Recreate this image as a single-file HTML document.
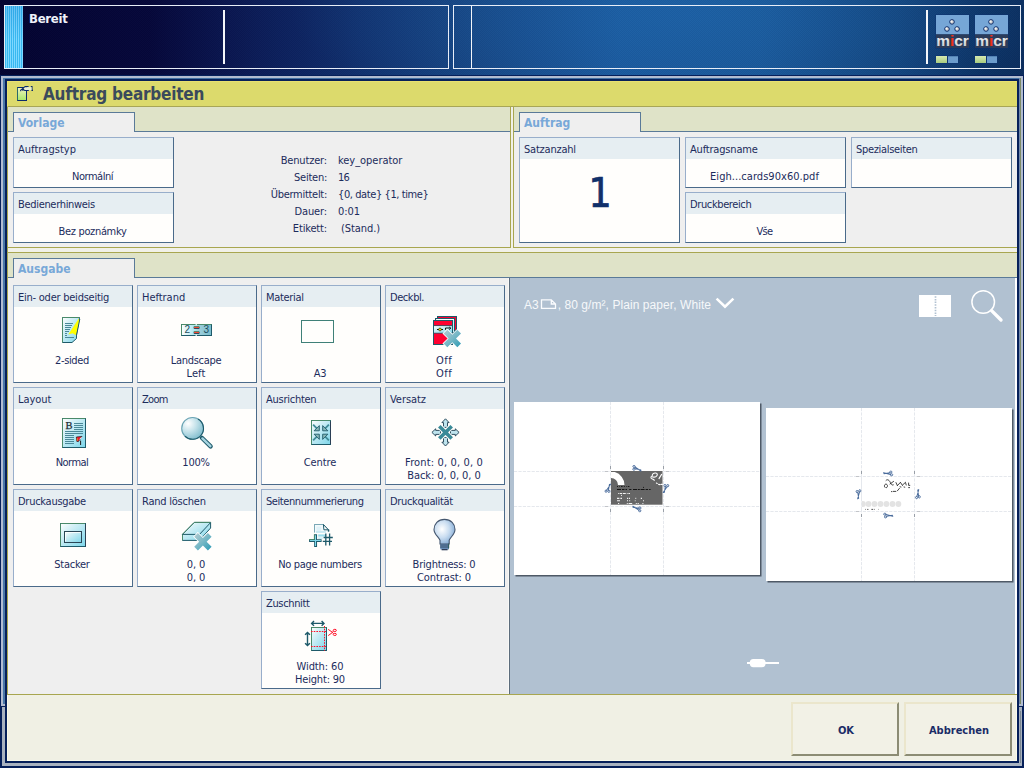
<!DOCTYPE html>
<html lang="de">
<head>
<meta charset="utf-8">
<title>Auftrag bearbeiten</title>
<style>
*{box-sizing:border-box;margin:0;padding:0}
html,body{width:1024px;height:768px;overflow:hidden}
body{position:relative;font-family:"DejaVu Sans Condensed","Liberation Sans",sans-serif;font-size:11px;letter-spacing:-.3px;color:#1c2c5c;
 background:#040530;}
.abs{position:absolute}
/* ---------- top status bar ---------- */
#topbg{position:absolute;left:0;top:0;width:1024px;height:76px;
 background:
  radial-gradient(ellipse 400px 110px at 690px 14px, rgba(32,112,186,.42), rgba(32,112,186,0) 100%),
  linear-gradient(90deg,#030330 0px,#05073a 150px,#0b1c58 260px,#10306e 360px,#15427f 470px,#19569a 620px,#185494 760px,#114078 900px,#0b3062 980px,#0a2c5c 1024px);}
#topbg:after{content:"";position:absolute;left:0;top:0;right:0;bottom:0;
 background:repeating-conic-gradient(rgba(0,0,20,.045) 0 25%,rgba(255,255,255,.015) 0 50%) 0 0/2px 2px;}
.tpanel{position:absolute;top:5px;height:64px;border:1px solid #e8eef8;}
#tp1{left:4px;width:445px}
#tp2{left:453px;width:568px}
#strip{position:absolute;left:0;top:0;width:18px;height:62px;
 background:linear-gradient(rgba(0,90,190,.18),rgba(0,90,190,0) 55%),repeating-linear-gradient(90deg,#38b8f0 0 1px,#7fd8ff 1px 2px);}
.vline{position:absolute;background:#f4f6fa}
#bereit{position:absolute;left:24px;top:5px;font-weight:bold;font-size:13px;color:#f0f2fa;line-height:15px;letter-spacing:-.25px}
/* ---------- window frame ---------- */
#frame{position:absolute;left:0;top:75px;width:1024px;height:693px;background:#06205a}
#frame i{position:absolute;display:block}
#winbg{position:absolute;left:7px;top:81px;width:1010px;height:680px;background:#efefef}
#win{position:absolute;left:0;top:0;width:1024px;height:768px}
#title{position:absolute;left:7px;top:81px;width:1010px;height:26px;background:#dcda6c;border-left:1px solid #e8e070;border-top:1px solid #e8e070;border-bottom:1px solid #a8a656}
#title span{position:absolute;left:35px;top:2px;font-weight:bold;font-size:17px;line-height:21px;color:#3a4a5c;letter-spacing:-.22px}

/* ---------- panels ---------- */
.olv{position:absolute;background:#a8a650}
.strip{position:absolute;background:#dfe3c8}
.band{position:absolute;background:#f1f1e8}
.tline{position:absolute;height:1px;background:#5a7a98}
.tab{position:absolute;width:122px;height:20px;background:#efefef;border:1px solid #5a7a98;border-bottom:none;
 font-weight:bold;font-size:12px;line-height:21px;padding-left:4px;color:#78a8d8;letter-spacing:0}
.card{position:absolute;background:#fffefc;border:1px solid #4a6a8a;border-top-color:#98aecb;border-left-color:#98aecb;text-align:center}
.card .h{position:absolute;left:0;top:0;right:0;height:21px;background:#e6eef2;text-align:left;padding-left:4px;line-height:24px;white-space:nowrap;overflow:hidden}
.card .v{position:absolute;left:0;right:2px;line-height:13px;white-space:nowrap}
.c2{width:161px;height:51px}
.c3{width:120px;height:98px}
.kv{position:absolute;line-height:13px;white-space:nowrap}
.kv.k{text-align:right;width:120px;left:207px}
.kv.w{left:338px}

/* ---------- preview pane ---------- */
#pv{position:absolute;left:510px;top:278px;width:505px;height:416px;background:#b1c1d1}
#pvtxt{position:absolute;left:524px;top:298px;font-family:"Liberation Sans",sans-serif;font-size:12px;line-height:15px;color:#f6f8fa;letter-spacing:.07px;white-space:nowrap}
.page{position:absolute;background:#fff;box-shadow:1.5px 1.5px 0 0 #4e5a68}
.gd{position:absolute}

.btn{position:absolute;width:108px;height:54px;background:#f2f1e6;border:2px solid #8c8c74;border-top:2px solid #ebe6cc;border-left:2px solid #ebe6cc;
 font-weight:bold;font-size:11px;line-height:53px;text-align:center;color:#1a2c66;letter-spacing:0;padding-left:2px}
</style>
</head>
<body>
<svg width="0" height="0" style="position:absolute"><defs>
<linearGradient id="gc" x1="0" y1="0" x2="1" y2="1"><stop offset="0" stop-color="#ffffff"/><stop offset=".3" stop-color="#d4f0f6"/><stop offset="1" stop-color="#7cd6ea"/></linearGradient>
<linearGradient id="gx" x1="0" y1="0" x2="1" y2="1"><stop offset="0" stop-color="#b4ccd2"/><stop offset=".5" stop-color="#78b8c6"/><stop offset="1" stop-color="#2a9ab4"/></linearGradient>
<linearGradient id="gh" x1="0" y1="0" x2="1" y2="0"><stop offset="0" stop-color="#ffffff"/><stop offset=".45" stop-color="#a8e4ee"/><stop offset=".55" stop-color="#a0d0dc"/><stop offset="1" stop-color="#78bccc"/></linearGradient>
<radialGradient id="gz" cx=".3" cy=".28" r=".75"><stop offset="0" stop-color="#ffffff"/><stop offset=".5" stop-color="#c4e2ea"/><stop offset="1" stop-color="#86c0d0"/></radialGradient>
<radialGradient id="gb" cx=".38" cy=".4" r=".7"><stop offset="0" stop-color="#ffffff"/><stop offset=".5" stop-color="#c8dcf0"/><stop offset="1" stop-color="#7aa4d0"/></radialGradient>
<linearGradient id="gt" x1="0" y1="0" x2="0" y2="1"><stop offset="0" stop-color="#f4f2c0"/><stop offset="1" stop-color="#a8e868"/></linearGradient>
<g id="xm"><path d="M3.70,0.00 L8.70,5.00 L13.70,0.00 L17.40,3.70 L12.40,8.70 L17.40,13.70 L13.70,17.40 L8.70,12.40 L3.70,17.40 L0.00,13.70 L5.00,8.70 L0.00,3.70 Z" fill="url(#gx)" stroke="#ffffff" stroke-width="1.6" stroke-linejoin="miter" paint-order="stroke"/></g>
<g id="sc"><ellipse cx="-3.3" cy="-1.5" rx="1.3" ry="1.1" fill="none" stroke="#4a6c9c" stroke-width="1"/><ellipse cx="-3" cy="1.6" rx="1.3" ry="1.1" fill="none" stroke="#4a6c9c" stroke-width="1"/><path d="M-2.2,-1 L5,2.4 M-1.9,1 L4.6,1.2 L5,2.4" fill="none" stroke="#4a6c9c" stroke-width="1.1" stroke-linecap="round"/></g>
<linearGradient id="gm" x1="0" y1="0" x2="0" y2="1"><stop offset="0" stop-color="#ffffff"/><stop offset="1" stop-color="#c4c8cc"/></linearGradient><linearGradient id="gg" x1="0" y1="0" x2="0" y2="1"><stop offset="0" stop-color="#d8eab0"/><stop offset="1" stop-color="#a8cc80"/></linearGradient>
</defs></svg>
<div id="topbg"></div>
<div class="tpanel" id="tp1">
  <div id="strip"></div>
  <div id="bereit">Bereit</div>
  <div class="vline" style="left:218px;top:4px;width:2px;height:54px"></div>
</div>
<div class="tpanel" id="tp2">
  <div class="vline" style="left:17px;top:0;width:1px;height:62px"></div>
  <div class="vline" style="left:472px;top:4px;width:2px;height:54px"></div>
</div>
<svg class="abs" style="left:930px;top:10px" width="90" height="58" viewBox="930 10 90 58"><rect x="935.5" y="14.5" width="34" height="34" fill="#0c3270"/><rect x="936" y="15" width="33" height="19.4" fill="#76a6d6"/><rect x="936" y="34.4" width="33" height="13.6" fill="#2c3c5a"/><circle cx="952" cy="21.9" r="2.3" fill="#cfcfcf" stroke="#0c2c6c" stroke-width="1"/><circle cx="951.5" cy="21.4" r="1" fill="#f6f6f6"/><circle cx="947" cy="29" r="2.3" fill="#cfcfcf" stroke="#0c2c6c" stroke-width="1"/><circle cx="946.5" cy="28.5" r="1" fill="#f6f6f6"/><circle cx="957.1" cy="29" r="2.3" fill="#cfcfcf" stroke="#0c2c6c" stroke-width="1"/><circle cx="956.6" cy="28.5" r="1" fill="#f6f6f6"/><text x="936.2" y="45.6" font-family="Liberation Sans,sans-serif" font-weight="bold" font-size="14" letter-spacing="0" textLength="32.6" lengthAdjust="spacingAndGlyphs" fill="url(#gm)">m<tspan fill="#f03018">i</tspan>cr</text><rect x="935.5" y="55.5" width="23" height="8" fill="#0c3270"/><rect x="936" y="56" width="11" height="7" fill="url(#gg)"/><rect x="948" y="56" width="10" height="7" fill="#6c9ccc"/><rect x="948" y="56" width="10" height="1" fill="#5484b4"/><rect x="974.5" y="14.5" width="34" height="34" fill="#0c3270"/><rect x="975" y="15" width="33" height="19.4" fill="#76a6d6"/><rect x="975" y="34.4" width="33" height="13.6" fill="#2c3c5a"/><circle cx="991" cy="21.9" r="2.3" fill="#cfcfcf" stroke="#0c2c6c" stroke-width="1"/><circle cx="990.5" cy="21.4" r="1" fill="#f6f6f6"/><circle cx="986" cy="29" r="2.3" fill="#cfcfcf" stroke="#0c2c6c" stroke-width="1"/><circle cx="985.5" cy="28.5" r="1" fill="#f6f6f6"/><circle cx="996.1" cy="29" r="2.3" fill="#cfcfcf" stroke="#0c2c6c" stroke-width="1"/><circle cx="995.6" cy="28.5" r="1" fill="#f6f6f6"/><text x="975.2" y="45.6" font-family="Liberation Sans,sans-serif" font-weight="bold" font-size="14" letter-spacing="0" textLength="32.6" lengthAdjust="spacingAndGlyphs" fill="url(#gm)">m<tspan fill="#f03018">i</tspan>cr</text><rect x="974.5" y="55.5" width="23" height="8" fill="#0c3270"/><rect x="975" y="56" width="11" height="7" fill="url(#gg)"/><rect x="987" y="56" width="10" height="7" fill="#6c9ccc"/><rect x="987" y="56" width="10" height="1" fill="#5484b4"/></svg>
<div id="frame"><i style="left:1px;top:1px;width:1022px;height:2px;background:#b2bcd0"></i><i style="left:3px;top:3px;width:1016px;height:1px;background:linear-gradient(#5a88b4,#2a5890)"></i><i style="left:1px;top:1px;width:2px;height:630px;background:#b2bcd0"></i><i style="left:3px;top:3px;width:2px;height:626px;background:#4a78a8"></i><i style="left:1px;top:629px;width:4px;height:2px;background:#b2bcd0"></i><i style="left:2px;top:632px;width:3px;height:59px;background:#a8b2c0"></i><i style="left:2px;top:688px;width:1020px;height:3px;background:#a8b2c0"></i><i style="left:1019px;top:3px;width:1px;height:626px;background:#7088ac"></i><i style="left:1020px;top:3px;width:1px;height:626px;background:#7c8a66"></i><i style="left:1021px;top:1px;width:2px;height:630px;background:#b2bcd0"></i><i style="left:1019px;top:629px;width:4px;height:2px;background:#b2bcd0"></i><i style="left:1019px;top:632px;width:3px;height:59px;background:#a8b2c0"></i><i style="left:1020px;top:636px;width:1px;height:52px;background:#7c8894"></i></div>
<div id="winbg"></div>
<div id="win">
  <div id="title"><span>Auftrag bearbeiten</span></div>

  <svg class="abs" style="left:15px;top:84px" width="20" height="19" viewBox="15 84 20 19"><rect x="17.5" y="87.5" width="9" height="13" fill="url(#gt)" stroke="#0c2c6c" stroke-width="1"/><path d="M17.5,100.5 V87.5" stroke="#2a6a6a" stroke-width="1"/><path d="M20.4,90.4 L23,88.4 L24.6,90.6" fill="none" stroke="#0c2c6c" stroke-width="1.1"/><path d="M24.4,86.5 H28.6 M30.8,86.5 H32 V90.4 H33 M24.4,90.5 H28.8 M22.4,90.5 h1 M20.2,90.6 h1" fill="none" stroke="#0c2c6c" stroke-width="1.1"/><rect x="24.6" y="87.2" width="7" height="2.8" fill="#e8eed8"/></svg>
  <!-- left window olive border -->
  <div class="olv" style="left:7px;top:107px;width:1px;height:588px"></div>
  <!-- Vorlage panel -->
  <div class="strip" style="left:8px;top:107px;width:502px;height:24px"></div>
  <div class="tline" style="left:8px;top:131px;width:502px"></div>
  <div class="olv" style="left:510px;top:107px;width:1px;height:141px"></div>
  <div class="olv" style="left:8px;top:247px;width:503px;height:1px"></div>
  <div class="tab" style="left:13px;top:112px">Vorlage</div>
  <div class="card c2" style="left:13px;top:137px"><div class="h"><span class="t" style="letter-spacing:0.02px">Auftragstyp</span></div><div class="v" style="top:32px"><span class="t" style="letter-spacing:-0.47px">Normální</span></div></div>
  <div class="card c2" style="left:13px;top:192px"><div class="h"><span class="t" style="letter-spacing:-0.32px">Bedienerhinweis</span></div><div class="v" style="top:32px"><span class="t" style="letter-spacing:-0.34px">Bez poznámky</span></div></div>
  <div class="kv k" style="top:154px"><span class="t" style="letter-spacing:-0.17px">Benutzer:</span></div><div class="kv w" style="top:154px"><span class="t" style="letter-spacing:-0.04px">key_operator</span></div>
  <div class="kv k" style="top:171px"><span class="t" style="letter-spacing:-0.25px">Seiten:</span></div><div class="kv w" style="top:171px"><span class="t" style="letter-spacing:-0.7px">16</span></div>
  <div class="kv k" style="top:188px"><span class="t" style="letter-spacing:-0.29px">Übermittelt:</span></div><div class="kv w" style="top:188px"><span class="t" style="letter-spacing:-0.41px">{0, date} {1, time}</span></div>
  <div class="kv k" style="top:205px"><span class="t" style="letter-spacing:-0.12px">Dauer:</span></div><div class="kv w" style="top:205px"><span class="t" style="letter-spacing:-0.04px">0:01</span></div>
  <div class="kv k" style="top:222px"><span class="t" style="letter-spacing:-0.15px">Etikett:</span></div><div class="kv w" style="top:222px;left:341px"><span class="t" style="letter-spacing:-0.07px">(Stand.)</span></div>
  <!-- gap between panels -->
  <div class="band" style="left:511px;top:107px;width:2px;height:145px"></div>
  <!-- Auftrag panel -->
  <div class="olv" style="left:513px;top:107px;width:1px;height:141px"></div>
  <div class="strip" style="left:514px;top:107px;width:503px;height:24px"></div>
  <div class="tline" style="left:514px;top:131px;width:503px"></div>
  <div class="olv" style="left:513px;top:247px;width:504px;height:1px"></div>
  <div class="tab" style="left:519px;top:112px">Auftrag</div>
  <div class="card" style="left:519px;top:137px;width:161px;height:106px"><div class="h"><span class="t" style="letter-spacing:-0.22px">Satzanzahl</span></div>
    <div class="v" style="top:30.6px;right:-1px;font-size:40.5px;line-height:48px;color:#10306a;-webkit-text-stroke:.7px #10306a;letter-spacing:0">1</div></div>
  <div class="card c2" style="left:685px;top:137px"><div class="h"><span class="t" style="letter-spacing:-0.18px">Auftragsname</span></div><div class="v" style="top:32px"><span class="t" style="letter-spacing:0.04px">Eigh...cards90x60.pdf</span></div></div>
  <div class="card c2" style="left:685px;top:192px"><div class="h"><span class="t" style="letter-spacing:-0.38px">Druckbereich</span></div><div class="v" style="top:32px"><span class="t" style="letter-spacing:-0.7px">Vše</span></div></div>
  <div class="card c2" style="left:851px;top:137px"><div class="h"><span class="t" style="letter-spacing:-0.32px">Spezialseiten</span></div></div>
  <!-- separator band -->
  <div class="band" style="left:8px;top:248px;width:1009px;height:4px"></div>
  <div class="olv" style="left:8px;top:252px;width:1009px;height:1px"></div>
  <!-- Ausgabe panel -->
  <div class="strip" style="left:8px;top:253px;width:1009px;height:24px"></div>
  <div class="tline" style="left:8px;top:277px;width:1009px"></div>
  <div class="tab" style="left:13px;top:258px">Ausgabe</div>
  <div class="card c3" style="left:13px;top:285px"><div class="h"><span class="t" style="letter-spacing:-0.24px">Ein- oder beidseitig</span></div><div class="v" style="top:68px"><span class="t" style="letter-spacing:-0.38px">2-sided</span></div></div>
  <div class="card c3" style="left:137px;top:285px"><div class="h"><span class="t" style="letter-spacing:-0.03px">Heftrand</span></div><div class="v" style="top:68px"><span class="t" style="letter-spacing:-0.28px">Landscape</span><br><span class="t" style="letter-spacing:0.12px">Left</span></div></div>
  <div class="card c3" style="left:261px;top:285px"><div class="h"><span class="t" style="letter-spacing:-0.33px">Material</span></div><div class="v" style="top:68px"><br><span class="t" style="letter-spacing:-0.21px">A3</span></div></div>
  <div class="card c3" style="left:385px;top:285px"><div class="h"><span class="t" style="letter-spacing:-0.43px">Deckbl.</span></div><div class="v" style="top:68px"><span class="t" style="letter-spacing:0.5px">Off</span><br><span class="t" style="letter-spacing:0.5px">Off</span></div></div>
  <div class="card c3" style="left:13px;top:387px"><div class="h"><span class="t" style="letter-spacing:-0.03px">Layout</span></div><div class="v" style="top:68px"><span class="t" style="letter-spacing:-0.55px">Normal</span></div></div>
  <div class="card c3" style="left:137px;top:387px"><div class="h"><span class="t" style="letter-spacing:-0.7px">Zoom</span></div><div class="v" style="top:68px"><span class="t" style="letter-spacing:-0.23px">100%</span></div></div>
  <div class="card c3" style="left:261px;top:387px"><div class="h"><span class="t" style="letter-spacing:-0.26px">Ausrichten</span></div><div class="v" style="top:68px"><span class="t" style="letter-spacing:-0.11px">Centre</span></div></div>
  <div class="card c3" style="left:385px;top:387px"><div class="h"><span class="t" style="letter-spacing:-0.06px">Versatz</span></div><div class="v" style="top:68px"><span class="t" style="letter-spacing:0.14px">Front: 0, 0, 0, 0</span><br><span class="t" style="letter-spacing:-0.07px">Back: 0, 0, 0, 0</span></div></div>
  <div class="card c3" style="left:13px;top:489px"><div class="h"><span class="t" style="letter-spacing:-0.27px">Druckausgabe</span></div><div class="v" style="top:68px"><span class="t" style="letter-spacing:-0.26px">Stacker</span></div></div>
  <div class="card c3" style="left:137px;top:489px"><div class="h"><span class="t" style="letter-spacing:-0.23px">Rand löschen</span></div><div class="v" style="top:68px"><span class="t" style="letter-spacing:-0.04px">0, 0</span><br><span class="t" style="letter-spacing:-0.04px">0, 0</span></div></div>
  <div class="card c3" style="left:261px;top:489px"><div class="h"><span class="t" style="letter-spacing:-0.42px">Seitennummerierung</span></div><div class="v" style="top:68px"><span class="t" style="letter-spacing:-0.31px">No page numbers</span></div></div>
  <div class="card c3" style="left:385px;top:489px"><div class="h"><span class="t" style="letter-spacing:-0.33px">Druckqualität</span></div><div class="v" style="top:68px"><span class="t" style="letter-spacing:-0.2px">Brightness: 0</span><br><span class="t" style="letter-spacing:-0.08px">Contrast: 0</span></div></div>
  <div class="card c3" style="left:261px;top:591px"><div class="h"><span class="t" style="letter-spacing:-0.35px">Zuschnitt</span></div><div class="v" style="top:68px"><span class="t" style="letter-spacing:-0.11px">Width: 60</span><br><span class="t" style="letter-spacing:-0.19px">Height: 90</span></div></div>
  <!-- icons -->
  <svg class="abs" style="left:60px;top:315px" width="24" height="30" viewBox="60 315 24 30"><path d="M62.5,317.5 H79.5 L76.5,334 V338.5 L72,342.5 H62.5 Z" fill="url(#gc)" stroke="#1e5a6a" stroke-width="1"/><path d="M62.5,342.5 V317.5 H79.5" fill="none" stroke="#4a8a6a" stroke-width="1"/><path d="M65,323.5 H73" stroke="#4a8898" stroke-width="1"/><path d="M65,325.5 H72" stroke="#4a8898" stroke-width="1"/><path d="M65,327.5 H71" stroke="#4a8898" stroke-width="1"/><path d="M65,329.5 H70" stroke="#4a8898" stroke-width="1"/><path d="M65,331.5 H69" stroke="#4a8898" stroke-width="1"/><path d="M65,333.5 H67" stroke="#4a8898" stroke-width="1"/><path d="M65,335.5 H67" stroke="#4a8898" stroke-width="1"/><path d="M65,337.5 H74" stroke="#4a8898" stroke-width="1"/><path d="M78.8,318.5 L79.6,321 L76.2,335.2 L72.5,333.2 L68.3,334.6 Z" fill="#ffff00"/><path d="M79.8,319 L76.6,335" stroke="#1e5a6a" stroke-width="1" fill="none"/></svg>
  <svg class="abs" style="left:179px;top:322px" width="36" height="16" viewBox="179 322 36 16"><rect x="181.5" y="324.5" width="30" height="11" fill="url(#gh)" stroke="#1e5a6a"/><path d="M181.5,335.5 V324.5 H211.5" fill="none" stroke="#4a8a6a"/><rect x="195.6" y="323.8" width="1.2" height="1.6" fill="#fffefc"/><rect x="195.6" y="334.6" width="1.2" height="1.8" fill="#fffefc"/><text x="184.4" y="333.3" font-family="Liberation Sans,sans-serif" font-size="10" fill="#1c4c5c" letter-spacing="0">2</text><text x="203.4" y="333.3" font-family="Liberation Sans,sans-serif" font-size="10" fill="#1c4c5c" letter-spacing="0">3</text><rect x="193.6" y="326.6" width="6" height="2.4" rx="1" fill="#1e4a5a"/><rect x="193.8" y="326.1" width="5.4" height="1" fill="#4a8a6a"/><rect x="194" y="326.90000000000003" width="5" height="1.2" fill="#f04a38"/><rect x="193.6" y="331.6" width="6" height="2.4" rx="1" fill="#1e4a5a"/><rect x="193.8" y="331.1" width="5.4" height="1" fill="#4a8a6a"/><rect x="194" y="331.90000000000003" width="5" height="1.2" fill="#f04a38"/></svg>
  <svg class="abs" style="left:300px;top:319px" width="36" height="26" viewBox="300 319 36 26"><rect x="301.5" y="320.5" width="32" height="22" fill="#fffefc" stroke="#3f8078"/></svg>
  <svg class="abs" style="left:431px;top:314px" width="34" height="36" viewBox="431 314 34 36"><rect x="437.5" y="316.5" width="19" height="14" fill="#ff0030" stroke="#1e5a6a"/><rect x="435.5" y="318.5" width="19" height="14" fill="#c8eef6" stroke="#1e5a6a"/><path d="M436.5,319.6 H454" stroke="#ffffff"/><rect x="433.5" y="320.5" width="19" height="24" fill="#ff0030" stroke="#1e5a6a"/><rect x="434" y="326" width="18" height="7" fill="url(#gc)"/><path d="M434,325.6 H452 M434,333.2 H452" stroke="#1e5a6a" stroke-width=".8"/><path d="M437,329.5 H443" stroke="#101010" stroke-width="1"/><circle cx="440" cy="329.5" r="1.4" fill="#f0e010" stroke="#101010" stroke-width=".6"/><path d="M445.5,329.8 V328 H450.5 M449.3,327 L450.8,328.2 L449.3,329.6" stroke="#101010" stroke-width="1" fill="none"/><use href="#xm" x="443.6" y="329.8"/></svg>
  <svg class="abs" style="left:60px;top:416px" width="30" height="34" viewBox="60 416 30 34"><rect x="62.5" y="418.5" width="23" height="29" fill="url(#gc)" stroke="#1e5a6a"/><path d="M62.5,447.5 V418.5 H85.5" fill="none" stroke="#4a8a6a"/><text x="65.6" y="429.3" font-family="Liberation Serif,serif" font-size="10.5" fill="#1e2e34" stroke="#1e2e34" stroke-width=".25" letter-spacing="0">B</text><path d="M74,423.5 H83" stroke="#4a8898"/><path d="M74,425.5 H83" stroke="#4a8898"/><path d="M74,427.5 H83" stroke="#4a8898"/><path d="M74,429.5 H83" stroke="#4a8898"/><path d="M65,431.5 H83" stroke="#4a8898"/><path d="M65,433.5 H83" stroke="#4a8898"/><path d="M65,435.5 H74" stroke="#4a8898"/><path d="M65,437.5 H74" stroke="#4a8898"/><path d="M65,439.5 H74" stroke="#4a8898"/><path d="M65,441.5 H74" stroke="#4a8898"/><path d="M65,443.5 H74" stroke="#4a8898"/><path d="M76.4,437 L82,436.4 L78.4,441.6 L76.8,441.4 Z" fill="#f01030" stroke="#202020" stroke-width=".7"/><path d="M76.8,438 L78,438.4 L77.6,441 L76.8,441 Z" fill="#f08020"/><path d="M80.6,440.6 V445" stroke="#202020" stroke-width="1"/><path d="M79.6,439.4 L81.6,437.2" stroke="#fff" stroke-width=".9"/></svg>
  <svg class="abs" style="left:179px;top:415px" width="36" height="36" viewBox="179 415 36 36"><path d="M201.8,437.8 L210.6,446.4" stroke="#1e5a6a" stroke-width="4.4" stroke-linecap="round"/><path d="M202.4,438.4 L210.4,446.2" stroke="#a6d4e0" stroke-width="2.4" stroke-linecap="round"/><circle cx="192.6" cy="428.4" r="10.9" fill="url(#gz)" stroke="#6aa4b4" stroke-width="1.1"/><path d="M198.05,418.96 A10.9,10.9 0 1 1 184.89,436.11" fill="none" stroke="#1e5a6a" stroke-width="1.1"/></svg>
  <svg class="abs" style="left:309px;top:418px" width="26" height="30" viewBox="309 418 26 30"><rect x="311.5" y="420.5" width="19" height="24" fill="url(#gc)" stroke="#1e5a6a"/><path d="M311.5,444.5 V420.5 H330.5" fill="none" stroke="#4a8a6a"/><path d="M330.5,421.5 V444" stroke="#2a3e54"/><path d="M313.1,424.6 L317.8,429.3" stroke="#3f8c98" stroke-width="1.8"/><path d="M319.3,425.6 V430.8 H314.1 Z" fill="#8ab8b8" stroke="#1e5a6a" stroke-width=".9"/><path d="M328.9,424.6 L324.2,429.3" stroke="#3f8c98" stroke-width="1.8"/><path d="M322.7,425.6 V430.8 H327.9 Z" fill="#8ab8b8" stroke="#1e5a6a" stroke-width=".9"/><path d="M313.1,440.4 L317.8,435.7" stroke="#3f8c98" stroke-width="1.8"/><path d="M319.3,439.4 V434.2 H314.1 Z" fill="#8ab8b8" stroke="#1e5a6a" stroke-width=".9"/><path d="M328.9,440.4 L324.2,435.7" stroke="#3f8c98" stroke-width="1.8"/><path d="M322.7,439.4 V434.2 H327.9 Z" fill="#8ab8b8" stroke="#1e5a6a" stroke-width=".9"/></svg>
  <svg class="abs" style="left:430px;top:417px" width="32" height="32" viewBox="430 417 32 32"><g transform="rotate(0 445.5 432.4)"><path d="M445.5,418.79999999999995 L449.1,422.59999999999997 H447.5 V427.4 H443.5 V422.59999999999997 H441.9 Z" fill="#bfe4ee" stroke="#1e3e50" stroke-width=".9" stroke-linejoin="miter"/></g><g transform="rotate(90 445.5 432.4)"><path d="M445.5,418.79999999999995 L449.1,422.59999999999997 H447.5 V427.4 H443.5 V422.59999999999997 H441.9 Z" fill="#bfe4ee" stroke="#1e3e50" stroke-width=".9" stroke-linejoin="miter"/></g><g transform="rotate(180 445.5 432.4)"><path d="M445.5,418.79999999999995 L449.1,422.59999999999997 H447.5 V427.4 H443.5 V422.59999999999997 H441.9 Z" fill="#bfe4ee" stroke="#1e3e50" stroke-width=".9" stroke-linejoin="miter"/></g><g transform="rotate(270 445.5 432.4)"><path d="M445.5,418.79999999999995 L449.1,422.59999999999997 H447.5 V427.4 H443.5 V422.59999999999997 H441.9 Z" fill="#bfe4ee" stroke="#1e3e50" stroke-width=".9" stroke-linejoin="miter"/></g><path d="M439.9,426.79999999999995 L451.1,438.0 M451.1,426.79999999999995 L439.9,438.0" stroke="#fffefc" stroke-width="5.6"/><path d="M439.3,426.2 L451.7,438.59999999999997 M451.7,426.2 L439.3,438.59999999999997" stroke="#3a8a98" stroke-width="3.6"/></svg>
  <svg class="abs" style="left:58px;top:521px" width="30" height="28" viewBox="58 521 30 28"><rect x="60.5" y="523.5" width="25" height="23" fill="url(#gc)" stroke="#1e5a6a"/><path d="M60.5,546.5 V523.5 H85" fill="none" stroke="#4a8a6a"/><path d="M85.5,524.5 V546.5" stroke="#2a4052"/><rect x="64.5" y="531.5" width="17" height="11" fill="url(#gc)" stroke="#2a4656"/><path d="M65.5,541.5 V532.5 H80.5" stroke="#ffffff" fill="none" stroke-width=".8"/></svg>
  <svg class="abs" style="left:180px;top:520px" width="36" height="34" viewBox="180 520 36 34"><path d="M182.5,534.3 L194.3,522.4 H210.6 V528 L199.5,540.4 H182.5 Z" fill="url(#gc)" stroke="#1e5a6a" stroke-width="1"/><path d="M182.5,540.4 V534.3 L194.3,522.4 H210.6" fill="none" stroke="#4a8a6a" stroke-width="1"/><path d="M182.5,534.4 H199.5 L210.4,522.8 M199.5,534.4 V540" fill="none" stroke="#1e5a6a" stroke-width="1"/><use href="#xm" x="194.2" y="533"/></svg>
  <svg class="abs" style="left:307px;top:522px" width="30" height="28" viewBox="307 522 30 28"><path d="M314.5,532.5 V524.5 H323.4 L328.4,529.8 V531.5" fill="#f2fafc" stroke="#6a9cac" stroke-width="1"/><path d="M314.5,532 V524.5 H323.4" fill="none" stroke="#7aa8b6"/><path d="M323.4,524.5 L328.4,529.8 H323.9 Z" fill="#fff" stroke="#1e5a6a" stroke-width="1" stroke-linejoin="round"/><path d="M328.6,529.6 V531.6" stroke="#1e5a6a" stroke-width="1.4"/><rect x="316.4" y="526.6" width="4.8" height="4.6" fill="#e0f2f8"/><path d="M316,532 H326" stroke="#c0e6f0" stroke-width="1.6"/><rect x="318.2" y="534.4" width="7.6" height="2.2" fill="#9adcec"/><rect x="318.2" y="537.6" width="4.6" height="1" fill="#a8e0ee"/><path d="M315.6,534.3 V546.9 M309.1,540.6 H321.6" stroke="#1e5a6a" stroke-width="2.9"/><path d="M315.5,535.2 V546 M310,540.5 H320.8" stroke="#7fd8ec" stroke-width="1.1"/><path d="M309.2,539.6 H314.4 V534.4" fill="none" stroke="#4a8a6a" stroke-width="1"/><path d="M325.8,533.4 V545.6 M329.6,533.4 V545.6 M323.6,537.5 H332.8 M322.8,541.4 H332" stroke="#1e5a6a" stroke-width="1.3" fill="none"/></svg>
  <svg class="abs" style="left:432px;top:517px" width="26" height="36" viewBox="432 517 26 36"><path d="M444.5,519.4 C451,519.4 455,524 455,529.4 C455,534 450.6,537 449.2,540.2 V544 H440 V540.2 C438.6,537 434,534 434,529.4 C434,524 438,519.4 444.5,519.4 Z" fill="url(#gb)" stroke="#44566e" stroke-width="1.1"/><rect x="440.2" y="544" width="8.8" height="5.4" fill="#6e94c0"/><path d="M440,545 H449.2 M440,547 H449.2" stroke="#2e4660" stroke-width="1"/><path d="M441.6,549.6 H447.6" stroke="#2e3e58" stroke-width="1.4"/><path d="M448.6,543.6 V548.4" stroke="#2e5e5e" stroke-width="1"/></svg>
  <svg class="abs" style="left:303px;top:618px" width="36" height="36" viewBox="303 618 36 36"><rect x="311.5" y="627.5" width="15" height="23" fill="url(#gc)" stroke="#1e5a6a"/><path d="M311.5,650.5 V627.5 H326.5" fill="none" stroke="#4a8a6a"/><path d="M312,623.4 H323.6 M314,621 L311.6,623.4 L314,625.8 M321.6,621 L324,623.4 L321.6,625.8" fill="none" stroke="#1e5a6a" stroke-width="1.4"/><path d="M307.5,632.6 V645.4 M305.1,634.8 L307.5,632.4 L309.9,634.8 M305.1,643.2 L307.5,645.6 L309.9,643.2" fill="none" stroke="#1e5a6a" stroke-width="1.4"/><path d="M311,631.5 H327 M311,646.5 H327" stroke="#ff1028" stroke-width="1" stroke-dasharray="1.6 1.1"/><path d="M324.5,626 V651" stroke="#ff1028" stroke-width="1" stroke-dasharray="1.6 1.1"/><path d="M328.2,629.4 L332.6,632.4 L328.2,635.6" fill="none" stroke="#ff1028" stroke-width="1"/><ellipse cx="334.8" cy="630.4" rx="1.6" ry="1.1" fill="none" stroke="#ff1028" stroke-width="1"/><ellipse cx="334.8" cy="634.4" rx="1.6" ry="1.1" fill="none" stroke="#ff1028" stroke-width="1"/><path d="M332.4,632.4 L333.4,631.2 M332.4,632.4 L333.4,633.6" stroke="#ff1028" stroke-width="1"/></svg>
  <div class="abs" style="left:508px;top:278px;width:1px;height:416px;background:#f8f8f6"></div>
  <div class="abs" style="left:509px;top:278px;width:1px;height:416px;background:#5c6c7c"></div>
  <div id="pv"></div>
  <div class="abs" style="left:1015px;top:278px;width:2px;height:416px;background:#ffffff"></div>
  <div id="pvtxt">A3 <span style="display:inline-block;width:15.4px"></span>, 80 g/m², Plain paper, White</div>
  <svg class="abs" style="left:540px;top:298px" width="18" height="12" viewBox="540 298 18 12"><path d="M541.5,299.9 H551.3 L555.5,304 V308.3 H541.5 Z M551.3,299.9 V304 H555.5" fill="none" stroke="#fafcfe" stroke-width="1.3" stroke-linejoin="miter"/></svg>
  <svg class="abs" style="left:714px;top:296px" width="22" height="14" viewBox="714 296 22 14"><path d="M716.6,298.6 L725,306.6 L733.4,298.6" fill="none" stroke="#ffffff" stroke-width="2.6" stroke-linejoin="miter"/></svg>
  <svg class="abs" style="left:917px;top:293px" width="36" height="26" viewBox="917 293 36 26"><rect x="919" y="295" width="32" height="22" fill="#ffffff"/><path d="M935.5,296.2 V316" stroke="#b1c1d1" stroke-width="1.7" stroke-dasharray="1.5 1.2"/></svg>
  <svg class="abs" style="left:969px;top:288px" width="36" height="36" viewBox="969 288 36 36"><circle cx="983.2" cy="302" r="11.3" fill="none" stroke="#ffffff" stroke-width="1.5"/><path d="M991.6,310.6 L1001,320" stroke="#ffffff" stroke-width="3.4" stroke-linecap="round"/></svg>
  <svg class="abs" style="left:745px;top:657px" width="36" height="12" viewBox="745 657 36 12"><rect x="747" y="662" width="32" height="2" fill="#ffffff"/><rect x="749.8" y="659" width="15.8" height="8.2" rx="3.6" fill="#ffffff"/></svg>
  <svg class="abs" style="left:512px;top:400px" width="252" height="180" viewBox="512 400 252 180"><rect x="514" y="402" width="246" height="173" fill="#ffffff"/><path d="M760.75,403.5 V575.75 H515.5" fill="none" stroke="#4e5966" stroke-width="1.5"/><path d="M610.5,402 V575" stroke="#e5e8ed" stroke-width="1" stroke-dasharray="3.2 1.2"/><path d="M663.5,402 V575" stroke="#e5e8ed" stroke-width="1" stroke-dasharray="3.2 1.2"/><path d="M514,471.5 H760" stroke="#e5e8ed" stroke-width="1" stroke-dasharray="3.2 1.2"/><path d="M514,506.5 H760" stroke="#e5e8ed" stroke-width="1" stroke-dasharray="3.2 1.2"/><path d="M610.5,466 v3 M610.5,509 v3" stroke="#9aa0a8" stroke-width="1"/><path d="M663.5,466 v3 M663.5,509 v3" stroke="#9aa0a8" stroke-width="1"/><path d="M605,471.5 h3 M666,471.5 h3" stroke="#c2c4c8" stroke-width="1"/><path d="M605,506.5 h3 M666,506.5 h3" stroke="#c2c4c8" stroke-width="1"/><rect x="611" y="471" width="51.5" height="33.7" fill="#666666"/><path d="M611,472 H614.8 A13.5,13.5 0 0 1 624.5,485 H618 A7,7 0 0 0 611,478 Z" fill="#ffffff"/><path d="M617,486.5 H630" stroke="#1a1a1a" stroke-width="1" stroke-dasharray="1 1.4 .6 1 1.6 1.2"/><path d="M643,487.4 h1" stroke="#1a1a1a"/><path d="M617,489.5 H651" stroke="#141414" stroke-width="1.2" stroke-dasharray="4 1 2.5 1 1.5 2.2 2.2 1.6 4 .8 2 .8"/><path d="M618,493.5 H630" stroke="#f2f2f2" stroke-width="1.1" stroke-dasharray=".8 .8 2.4 .8 3 1"/><path d="M621,495.4 h1" stroke="#eee"/><path d="M617,498.4 H644" stroke="#f2f2f2" stroke-width="1.1" stroke-dasharray="2.4 1 1.6 5 1.2 .8 1 5.4 .8 4.6 1.2 30"/><path d="M617,500.8 H645" stroke="#f2f2f2" stroke-width="1.1" stroke-dasharray="3 7 1 1.2 1 4.6 .8 7.4 1 30"/><path d="M618,503.5 H645" stroke="#f2f2f2" stroke-width="1.1" stroke-dasharray="1.2 7.6 1 .8 3.6 3.6 1 .8 1.2 3.6 1 30"/><path d="M652.4,479 C650.4,478.4 650.6,476.4 652.2,476 C652.2,474 653.6,472.8 655.6,473 C657.6,473.2 658,475.4 656,476.6 C654.8,477.4 653.6,477.2 652.6,477 M654.4,480.2 L653,479.2 M659,478.6 L661.6,474.4 M656.4,483 L657.2,483.4 M658.6,484.4 L660,484.6 M661.2,484.4 H662.4" fill="none" stroke="#ffffff" stroke-width="1.1" stroke-linecap="round"/><use href="#sc" transform="translate(636.8,468.2) rotate(8) scale(.9)"/><use href="#sc" transform="translate(607.8,488.4) rotate(-82) scale(.9)"/><use href="#sc" transform="translate(666,488.4) rotate(98) scale(.9)"/><use href="#sc" transform="translate(637,509) rotate(188) scale(.9)"/></svg>
  <svg class="abs" style="left:764px;top:406px" width="252" height="180" viewBox="764 406 252 180"><rect x="766" y="408" width="246" height="173" fill="#ffffff"/><path d="M1012.75,409.5 V581.75 H767.5" fill="none" stroke="#4e5966" stroke-width="1.5"/><path d="M861.5,408 V581" stroke="#e5e8ed" stroke-width="1" stroke-dasharray="3.2 1.2"/><path d="M914.5,408 V581" stroke="#e5e8ed" stroke-width="1" stroke-dasharray="3.2 1.2"/><path d="M766,476.5 H1012" stroke="#e5e8ed" stroke-width="1" stroke-dasharray="3.2 1.2"/><path d="M766,511.5 H1012" stroke="#e5e8ed" stroke-width="1" stroke-dasharray="3.2 1.2"/><path d="M861.5,471 v3 M861.5,514 v3" stroke="#9aa0a8" stroke-width="1"/><path d="M914.5,471 v3 M914.5,514 v3" stroke="#9aa0a8" stroke-width="1"/><path d="M856,476.5 h3 M917,476.5 h3" stroke="#c2c4c8" stroke-width="1"/><path d="M856,511.5 h3 M917,511.5 h3" stroke="#c2c4c8" stroke-width="1"/><circle cx="862.9" cy="504" r="2.9" fill="#e3e3e3"/><circle cx="868.5" cy="504" r="2.9" fill="#e3e3e3"/><circle cx="874.5" cy="504" r="2.9" fill="#e3e3e3"/><circle cx="880.5" cy="504" r="2.9" fill="#e3e3e3"/><circle cx="886.4" cy="504" r="2.9" fill="#e3e3e3"/><circle cx="892.5" cy="504" r="2.9" fill="#e3e3e3"/><circle cx="898.4" cy="504" r="2.9" fill="#e3e3e3"/><rect x="858" y="500" width="3.6" height="8" fill="#ffffff"/><path d="M861.5,476 V512" stroke="#e5e8ed" stroke-width="1" stroke-dasharray="3.2 1.2"/><path d="M865,509.4 H879" stroke="#3a3a3a" stroke-width=".9" stroke-dasharray=".6 1.6 1.2 3 1.8 .8 .6 4 .8 20"/><path d="M884.6,487 C883.6,485 885.6,483.2 887,484.6 C888.4,486 886.6,488.6 885.8,487.8 M886,480.4 C887.6,478.6 889.4,480.4 890.4,482.6 C891,484.4 892.6,485.8 893.4,485 M890,484 L893.6,481.4 M896,482.6 L897.4,485.6 M897.6,485.4 L900.4,482.4 M900.6,482.6 L902.4,485.4 M902.6,485 L905.4,482.4 M905.6,482.8 L906.2,485 M908.6,483 V485.4 H909.8 M908.6,487.6 H909.6 M900,486.8 L901,487 M904,487 L904.8,487.2 M899.4,488.4 L897.4,490.8 M891.4,491.6 H892 M893.4,491.4 H895.8" fill="none" stroke="#161616" stroke-width=".8" stroke-linecap="round"/><use href="#sc" transform="translate(888.4,474) rotate(170) scale(.9)"/><use href="#sc" transform="translate(859,494) rotate(80) scale(.9)"/><use href="#sc" transform="translate(917.4,494.4) rotate(-100) scale(.9)"/><use href="#sc" transform="translate(888,515) rotate(-10) scale(.9)"/></svg>
  <div class="olv" style="left:8px;top:694px;width:1009px;height:1px"></div>
  <div class="abs" style="left:7px;top:695px;width:1010px;height:66px;background:#f0f0e4;border:1px solid #fbfbea;border-top:none"></div>
  <div class="btn" style="left:791px;top:702px">OK</div>
  <div class="btn" style="left:904px;top:702px">Abbrechen</div>

</div>
</body>
</html>
